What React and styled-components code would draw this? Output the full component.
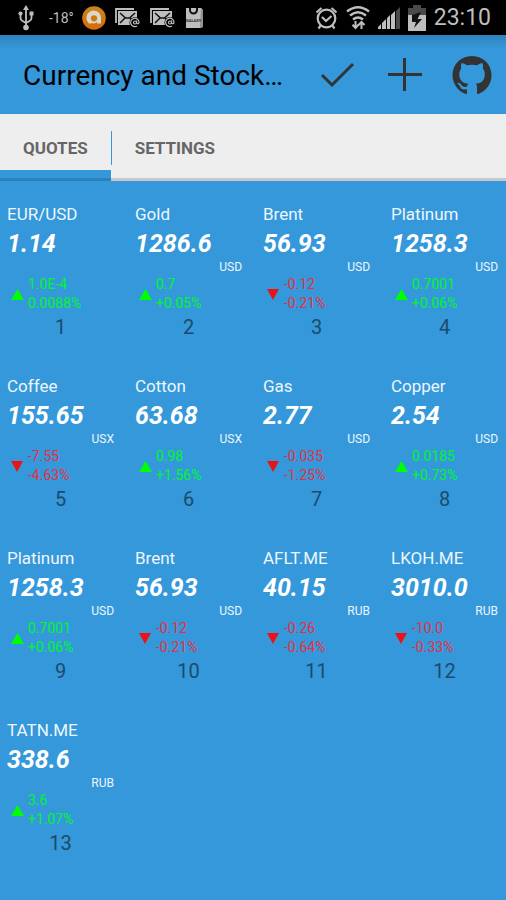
import React, { useState } from "react";
import styled, { createGlobalStyle } from "styled-components";

const GlobalStyle = createGlobalStyle`
  * { box-sizing: border-box; }
  body {
    margin: 0;
    min-height: 100vh;
    background: #3498db;
    font-family: Roboto, sans-serif;
  }
  button { font-family: inherit; border: 0; background: none; padding: 0; cursor: pointer; }
  svg { display: block; }
`;

const StatusBar = styled.div`
  display: flex;
  align-items: center;
  justify-content: space-between;
  height: 35px;
  padding: 0 15px 0 18px;
  background: #000;
  color: #bebebe;
`;

const StatusGroup = styled.div`
  display: flex;
  align-items: center;
  gap: ${(p) => p.$gap}px;
`;

const Temperature = styled.span`
  width: 24px;
  margin-left: 6px;
  font-size: 14px;
  line-height: 24px;
  white-space: nowrap;
`;

const Clock = styled.span`
  font-size: 23px;
  line-height: 34px;
`;

const Toolbar = styled.header`
  display: flex;
  align-items: center;
  height: 79px;
  padding: 0 14px 0 23px;
  background: linear-gradient(#2f83bb, #3498db 14px);
`;

const Title = styled.h1`
  flex: 1;
  margin: 0;
  padding-top: 2px;
  font-size: 28px;
  line-height: 36px;
  font-weight: 400;
  color: #000;
  white-space: nowrap;
`;

const Actions = styled.div`
  display: flex;
  align-items: center;
  gap: 28px;
`;

const Action = styled.button`
  width: 40px;
  height: 40px;
`;

const Tabs = styled.nav`
  display: flex;
  height: 67px;
  background: linear-gradient(transparent 64px, rgba(0, 0, 0, 0.16) 64px), #eee;
`;

const Tab = styled.button`
  padding: 11px 23px 0;
  border-bottom: 11px solid transparent;
  background: ${(p) =>
    p.$active
      ? "linear-gradient(transparent 56px, #3498db 56px, #3498db 64px, #2c81ba 64px) border-box"
      : "none"};
  font-size: 17px;
  line-height: 20px;
  font-weight: 700;
  color: #666;
`;

const Divider = styled.span`
  width: 1px;
  height: 34px;
  margin-top: 17px;
  background: #3498db;
`;

const Grid = styled.main`
  display: grid;
  grid-template-columns: repeat(4, 1fr);
  column-gap: 6px;
  padding-top: 1px;
`;

const Quote = styled.article`
  height: 172px;
  padding: 22px 8px 0 7px;
  color: #fff;
`;

const Name = styled.div`
  font-size: 17px;
  line-height: 20px;
  color: #eef6fc;
`;

const Price = styled.div`
  padding-top: 4px;
  font-size: 25px;
  line-height: 32px;
  font-weight: 700;
  font-style: italic;
`;

const Unit = styled.div`
  height: 15px;
  font-size: 12px;
  line-height: 15px;
  text-align: right;
  color: #eef6fc;
`;

const Change = styled.div`
  display: flex;
  align-items: center;
  gap: 4px;
  padding-left: 4px;
  color: ${(p) => (p.$up ? "#00f82c" : "#e8303f")};
`;

const Figures = styled.div`
  font-size: 14px;
  line-height: 19px;
`;

const Index = styled.div`
  font-size: 20px;
  line-height: 28px;
  text-align: center;
  color: #1d4b6c;
`;

const quotes = [
  ["EUR/USD", "1.14", "", "1.0E-4", "0.0088%", true],
  ["Gold", "1286.6", "USD", "0.7", "+0.05%", true],
  ["Brent", "56.93", "USD", "-0.12", "-0.21%", false],
  ["Platinum", "1258.3", "USD", "0.7001", "+0.06%", true],
  ["Coffee", "155.65", "USX", "-7.55", "-4.63%", false],
  ["Cotton", "63.68", "USX", "0.98", "+1.56%", true],
  ["Gas", "2.77", "USD", "-0.035", "-1.25%", false],
  ["Copper", "2.54", "USD", "0.0185", "+0.73%", true],
  ["Platinum", "1258.3", "USD", "0.7001", "+0.06%", true],
  ["Brent", "56.93", "USD", "-0.12", "-0.21%", false],
  ["AFLT.ME", "40.15", "RUB", "-0.26", "-0.64%", false],
  ["LKOH.ME", "3010.0", "RUB", "-10.0", "-0.33%", false],
  ["TATN.ME", "338.6", "RUB", "3.6", "+1.07%", true],
];

const UsbIcon = () => (
  <svg width="16" height="26" viewBox="0 0 16 26" fill="none" stroke="#bebebe" strokeWidth="1.8">
    <path d="M8 3v20M2.500 9v4q0 2 2 3L8 18M13.500 10v3q0 2-2 3L8 18" />
    <path d="M8 0l3 5H5z" fill="#bebebe" stroke="none" />
    <circle cx="8" cy="22.500" r="2.800" fill="#bebebe" stroke="none" />
    <circle cx="2.500" cy="8.500" r="2.100" fill="#bebebe" stroke="none" />
    <path d="M11.500 6.500h4v4h-4z" fill="#bebebe" stroke="none" />
  </svg>
);

const BrowserIcon = () => (
  <svg width="24" height="24" viewBox="0 0 24 24">
    <defs>
      <linearGradient id="amber" x1="0" y1="0" x2="0" y2="1">
        <stop offset="0" stopColor="#c9861f" />
        <stop offset="1" stopColor="#d86a06" />
      </linearGradient>
    </defs>
    <circle cx="12" cy="12" r="11.800" fill="url(#amber)" />
    <path
      d="M7 17.500A7.300 7.300 0 1 1 19 12v5.500h-4v-1.500q-2.500 2.300-5.300 1 -1.200.8-2.700.5z"
      fill="#ddd6cb"
    />
    <circle cx="12" cy="12.300" r="3.100" fill="#cf7813" />
  </svg>
);

const MailIcon = () => (
  <svg width="26" height="20" viewBox="0 0 26 20">
    <path d="M1 15V1h18" fill="none" stroke="#bebebe" strokeWidth="1.800" />
    <path d="M3 3h19v14H3z" fill="#bebebe" />
    <path d="M5 5l5.500 5h4L20 5M5 15l5-5M15 10l3 3" fill="none" stroke="#111" strokeWidth="1.500" />
    <circle cx="20" cy="14.500" r="5.500" fill="#000" />
    <circle cx="20" cy="14.500" r="1.500" fill="none" stroke="#bebebe" strokeWidth="1.200" />
    <path d="M21.600 12.500v2.800q2.400 1.300 2.400-1.300a4.200 4.200 0 1 0-2 4" fill="none" stroke="#bebebe" strokeWidth="1.200" />
  </svg>
);

const BagIcon = () => (
  <svg width="20" height="22" viewBox="0 0 20 22">
    <path d="M1 1h15l2 2v17l-3 1H1z" fill="#bebebe" />
    <path d="M16 1l2 2v17l-3 1z" fill="#929292" />
    <path d="M5 1v2a3.500 3.500 0 0 0 7 0V1" fill="none" stroke="#111" strokeWidth="2" />
    <text x="1" y="15" fontSize="4" fontFamily="Roboto, sans-serif" fontWeight="700" fill="#222">GALAXY</text>
  </svg>
);

const AlarmIcon = () => (
  <svg width="23" height="24" viewBox="0 0 23 24" fill="none" stroke="#bebebe" strokeWidth="2.200">
    <circle cx="11.500" cy="12.500" r="8.800" />
    <path d="M1.500 6.500l5-4.500M21.500 6.500l-5-4.500M6 19l-2.500 3.500M17 19l2.500 3.500M7 11l4 4 5.500-5" />
  </svg>
);

const WifiIcon = () => (
  <svg width="24" height="25" viewBox="0 0 24 25" fill="none" stroke="#bebebe" strokeWidth="2.400">
    <path d="M1 6.500q11-8.500 22 0M4 10.500q8-6.500 16 0M7 14.500q5-4 10 0" />
    <path d="M9.500 16v7M6.500 19.800l3 3.200 3-3.200M15.500 24v-7M12.500 20l3-3 3 3" strokeWidth="2" />
  </svg>
);

const SignalIcon = () => (
  <svg width="22" height="22" viewBox="0 0 22 22">
    <path d="M0 22v-2l3-3v5zM4 22v-6l4-4v10zM9 22V11l3-3v14zM13 22V8l4-4v18z" fill="#bebebe" />
    <path d="M18 22V4l4-4v22z" fill="#4a4a4a" />
  </svg>
);

const BatteryIcon = () => (
  <svg width="18" height="26" viewBox="0 0 18 26">
    <path d="M5 0h8v3h5v7H0V3h5z" fill="#4a4a4a" />
    <path d="M0 10h18v16H0z" fill="#bebebe" />
    <path d="M13 7L4 10v7h4l-2 6 8-9H9.500z" fill="#111" />
  </svg>
);

const CheckIcon = () => (
  <svg width="40" height="40" viewBox="0 0 40 40" fill="none" stroke="#333" strokeWidth="3">
    <path d="M6 20l10 10L37 9" />
  </svg>
);

const PlusIcon = () => (
  <svg width="40" height="40" viewBox="0 0 40 40" fill="none" stroke="#333" strokeWidth="3">
    <path d="M20.500 3v33M4 19.500h34" />
  </svg>
);

const GithubIcon = () => (
  <svg width="40" height="40" viewBox="0 0 16 16" fill="#333">
    <path d="M8 .4C3.580.4.2 3.780.2 8c0 3.540 2.290 6.530 5.270 7.590.4.070.55-.17.55-.38 0-.19-.01-.82-.01-1.490-2.010.37-2.530-.49-2.690-.94-.09-.23-.48-.94-.82-1.130-.28-.15-.68-.52-.01-.53.63-.01 1.080.58 1.230.82.72 1.210 1.870.87 2.330.66.07-.52.28-.87.51-1.070-1.780-.2-3.640-.89-3.640-3.950 0-.87.31-1.590.82-2.150-.08-.2-.36-1.020.08-2.120 0 0 .67-.21 2.200.82.64-.18 1.320-.27 2-.27s1.360.09 2 .27c1.530-1.040 2.200-.82 2.200-.82.44 1.100.16 1.920.08 2.120.51.56.82 1.270.82 2.150 0 3.070-1.870 3.750-3.650 3.950.29.25.54.73.54 1.480 0 1.070-.01 1.930-.01 2.200 0 .21.15.46.55.38A7.900 7.900 0 0 0 15.800 8C15.800 3.780 12.420.4 8 .4z" />
  </svg>
);

const Arrow = ({ up }) => (
  <svg width="13" height="11" viewBox="0 0 13 11">
    <path d={up ? "M6.500 0L13 11H0z" : "M0 0h12L6 11z"} fill={up ? "#00ff00" : "#e91515"} />
  </svg>
);

export default function App() {
  const [tab, setTab] = useState("quotes");
  return (
    <>
      <GlobalStyle />
      <StatusBar>
        <StatusGroup $gap={9}>
          <UsbIcon />
          <Temperature>-18°</Temperature>
          <BrowserIcon />
          <MailIcon />
          <MailIcon />
          <BagIcon />
        </StatusGroup>
        <StatusGroup $gap={8}>
          <AlarmIcon />
          <WifiIcon />
          <SignalIcon />
          <BatteryIcon />
          <Clock>23:10</Clock>
        </StatusGroup>
      </StatusBar>
      <Toolbar>
        <Title>Currency and Stock…</Title>
        <Actions>
          <Action aria-label="Confirm"><CheckIcon /></Action>
          <Action aria-label="Add"><PlusIcon /></Action>
          <Action aria-label="GitHub"><GithubIcon /></Action>
        </Actions>
      </Toolbar>
      <Tabs>
        <Tab $active={tab === "quotes"} onClick={() => setTab("quotes")}>QUOTES</Tab>
        <Divider />
        <Tab $active={tab === "settings"} onClick={() => setTab("settings")}>SETTINGS</Tab>
      </Tabs>
      <Grid>
        {quotes.map(([name, price, unit, delta, percent, up], i) => (
          <Quote key={i}>
            <Name>{name}</Name>
            <Price>{price}</Price>
            <Unit>{unit}</Unit>
            <Change $up={up}>
              <Arrow up={up} />
              <Figures>
                <div>{delta}</div>
                <div>{percent}</div>
              </Figures>
            </Change>
            <Index>{i + 1}</Index>
          </Quote>
        ))}
      </Grid>
    </>
  );
}
